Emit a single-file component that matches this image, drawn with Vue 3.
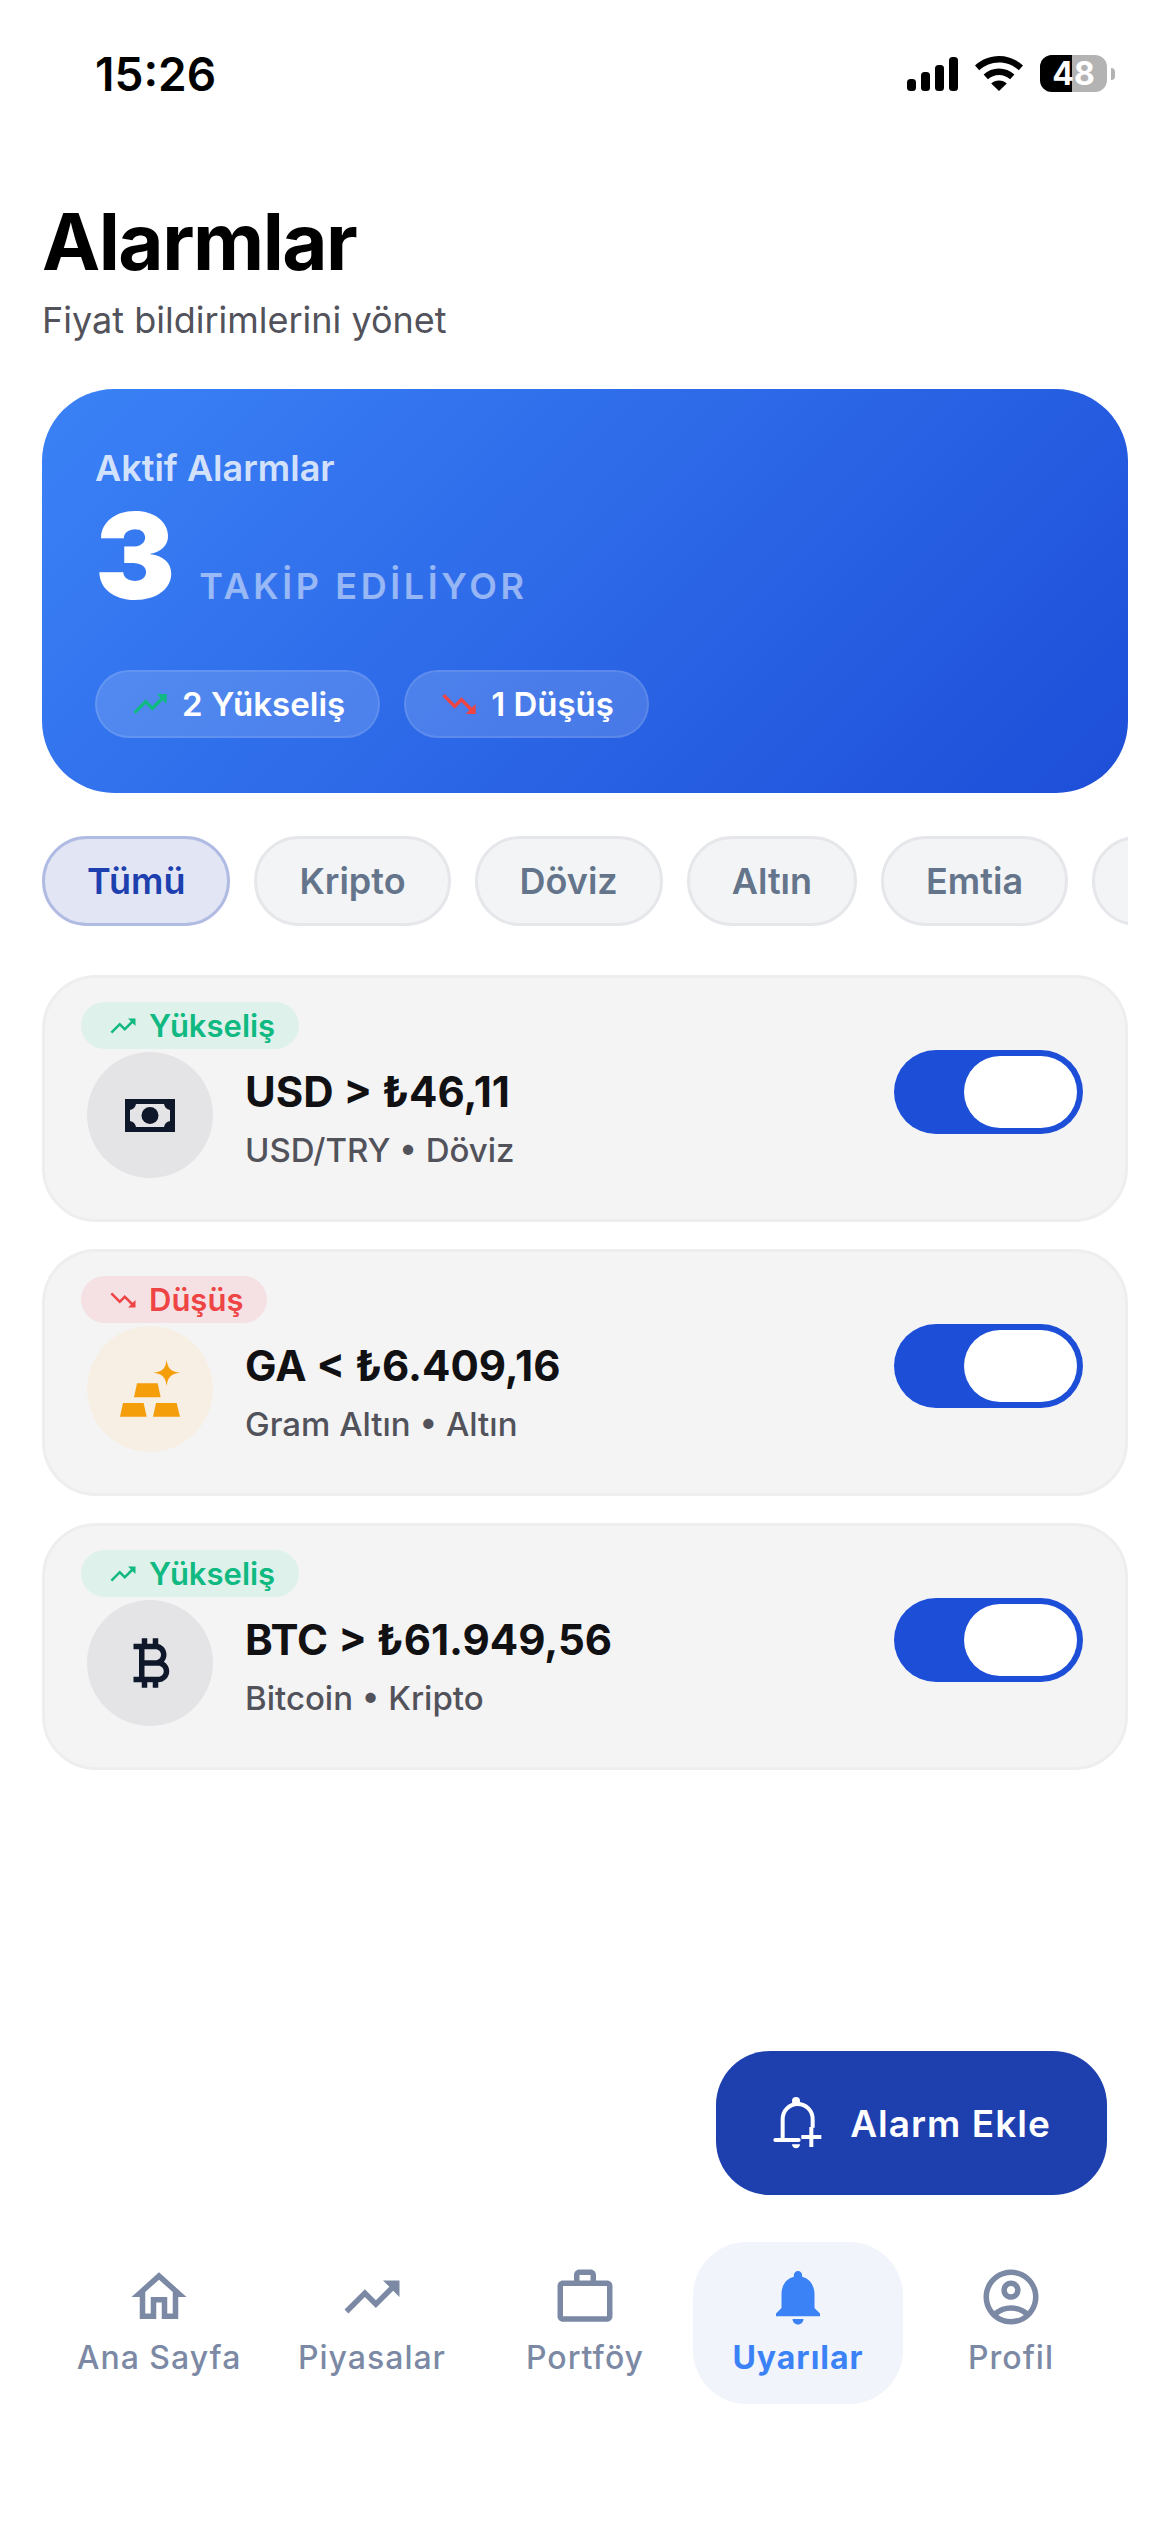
<script setup>
const batteryLevel = 48

const chips = [
  { label: 'Tümü', active: true },
  { label: 'Kripto' },
  { label: 'Döviz' },
  { label: 'Altın' },
  { label: 'Emtia' },
  { label: 'Hisse' }
]

const alerts = [
  { id: 'usd', dir: 'up', title: 'USD > ₺46,11', sub: 'USD/TRY • Döviz', kind: 'cash' },
  { id: 'ga', dir: 'down', title: 'GA < ₺6.409,16', sub: 'Gram Altın • Altın', kind: 'gold' },
  { id: 'btc', dir: 'up', title: 'BTC > ₺61.949,56', sub: 'Bitcoin • Kripto', kind: 'btc' }
]

const trendUp = 'M16 6l2.29 2.29-4.88 4.88-4-4L2 16.59 3.41 18l6-6 4 4 6.3-6.29L22 12V6z'
const trendDown = 'M16 18l2.29-2.29-4.88-4.88-4 4L2 7.41 3.41 6l6 6 4-4 6.3 6.29L22 12v6z'

const tabs = [
  { label: 'Ana Sayfa', d: 'M12 5.69l5 4.5V18h-2v-6H9v6H7v-7.81l5-4.5M12 3L2 12h3v8h6v-6h2v6h6v-8h3L12 3z' },
  { label: 'Piyasalar', d: trendUp },
  { label: 'Portföy', d: 'M14 6V4h-4v2h4zM4 8v11h16V8H4zm16-2c1.11 0 2 .89 2 2v11c0 1.11-.89 2-2 2H4c-1.11 0-2-.89-2-2l.01-11c0-1.11.88-2 1.99-2h4V4c0-1.11.89-2 2-2h4c1.11 0 2 .89 2 2v2h4z' },
  { label: 'Uyarılar', active: true, d: 'M12 22c1.1 0 2-.9 2-2h-4c0 1.1.89 2 2 2zm6-6v-5c0-3.07-1.64-5.64-4.5-6.32V4c0-.83-.67-1.5-1.5-1.5s-1.5.67-1.5 1.5v.68C7.63 5.36 6 7.92 6 11v5l-2 2v1h16v-1l-2-2z' },
  { label: 'Profil', d: 'M12 2C6.48 2 2 6.48 2 12s4.48 10 10 10 10-4.48 10-10S17.52 2 12 2zM7.35 18.5C8.66 17.56 10.26 17 12 17s3.34.56 4.65 1.5c-1.31.94-2.91 1.5-4.65 1.5s-3.34-.56-4.65-1.5zm10.79-1.38C16.45 15.8 14.32 15 12 15s-4.45.8-6.14 2.12C4.7 15.73 4 13.95 4 12c0-4.42 3.58-8 8-8s8 3.58 8 8c0 1.95-.7 3.73-1.86 5.12zM12 6c-1.93 0-3.5 1.57-3.5 3.5S10.07 13 12 13s3.5-1.57 3.5-3.5S13.93 6 12 6zm0 5c-.83 0-1.5-.67-1.5-1.5S11.17 8 12 8s1.5.67 1.5 1.5S12.83 11 12 11z' }
]
</script>

<template>
  <div class="screen">
    <header class="status">
      <span class="clock">15:26</span>
      <div class="status-icons">
        <svg class="signal" viewBox="0 0 51 34" fill="#000">
          <rect x="0" y="22" width="9" height="12" rx="3.5" />
          <rect x="14" y="15" width="9" height="19" rx="3.5" />
          <rect x="28" y="8" width="9" height="26" rx="3.5" />
          <rect x="42" y="0" width="9" height="34" rx="3.5" />
        </svg>
        <svg class="wifi" viewBox="0 0 48 35" fill="#000">
          <path d="M24 0C15 0 6.6 3.5 0 9.4l4.2 4.8C9.7 9.2 16.5 6.4 24 6.4s14.3 2.8 19.8 7.8L48 9.4C41.4 3.5 33 0 24 0z" />
          <path d="M24 12.5c-5.9 0-11.2 2.2-15.4 6l4.3 4.8c3-2.7 6.8-4.3 11.1-4.3s8.100 1.600 11.100 4.300l4.300-4.800c-4.200-3.800-9.500-6-15.400-6z" />
          <path d="M24 24.500c-3 0-5.700 1.100-7.800 3L24 35l7.800-7.500c-2.100-1.900-4.800-3-7.800-3z" />
        </svg>
        <div class="battery">
          <div class="battery-fill" :style="{ width: batteryLevel + '%' }"></div>
          <span class="battery-text">{{ batteryLevel }}</span>
        </div>
        <span class="battery-cap"></span>
      </div>
    </header>

    <section class="heading">
      <h1>Alarmlar</h1>
      <p>Fiyat bildirimlerini yönet</p>
    </section>

    <section class="hero">
      <div class="hero-label">Aktif Alarmlar</div>
      <div class="hero-count">
        <span class="hero-num">3</span>
        <span class="hero-note">TAKİP EDİLİYOR</span>
      </div>
      <div class="hero-pills">
        <div class="pill">
          <svg viewBox="0 0 24 24" fill="#10b981"><path :d="trendUp" /></svg>
          <span>2 Yükseliş</span>
        </div>
        <div class="pill">
          <svg viewBox="0 0 24 24" fill="#ef4444"><path :d="trendDown" /></svg>
          <span>1 Düşüş</span>
        </div>
      </div>
    </section>

    <nav class="chips">
      <button v-for="c in chips" :key="c.label" class="chip" :class="{ active: c.active }">{{ c.label }}</button>
    </nav>

    <section class="list">
      <article v-for="a in alerts" :key="a.id" class="card">
        <div class="card-main">
          <div class="badge" :class="a.dir">
            <svg viewBox="0 0 24 24" fill="currentColor"><path :d="a.dir === 'up' ? trendUp : trendDown" /></svg>
            <span>{{ a.dir === 'up' ? 'Yükseliş' : 'Düşüş' }}</span>
          </div>
          <div class="row">
            <div class="avatar" :class="{ gold: a.kind === 'gold' }">
              <svg v-if="a.kind === 'cash'" class="ico-cash" viewBox="0 0 50 33">
                <rect width="50" height="33" fill="#0f172a" />
                <path d="M11 5h28c.6 3.400 2.600 5.400 6 6v11c-3.400.6-5.400 2.600-6 6H11c-.6-3.400-2.600-5.400-6-6V11c3.400-.6 5.400-2.600 6-6z" fill="#e4e4e7" />
                <circle cx="25" cy="16.500" r="8.500" fill="#0f172a" />
              </svg>
              <svg v-else-if="a.kind === 'gold'" class="ico-gold" viewBox="0 0 198 198" fill="#f59e0b">
                <path d="M60 82h62l9 42H51z" />
                <path d="M18 141h62l9 41H9z" />
                <path d="M117 141h62l10 41H108z" />
                <path d="M149 11c3 26 13 36 40 39-27 3-37 13-40 40-3-27-13-37-40-40 27-3 37-13 40-39z" />
              </svg>
              <svg v-else class="ico-btc" viewBox="0 0 24 24" fill="#0f172a">
                <path d="M17.060 11.570c.59-.69.94-1.590.94-2.570 0-1.860-1.270-3.430-3-3.870V3h-2v2h-2V3H9v2H6v2h2v10H6v2h3v2h2v-2h2v2h2v-2c2.210 0 4-1.790 4-4 0-1.450-.78-2.730-1.940-3.430zM10 7h4c1.100 0 2 .9 2 2s-.9 2-2 2h-4V7zm5 10h-5v-4h5c1.100 0 2 .9 2 2s-.9 2-2 2z" />
              </svg>
            </div>
            <div class="text">
              <div class="title">{{ a.title }}</div>
              <div class="sub">{{ a.sub }}</div>
            </div>
          </div>
        </div>
        <div class="toggle"><span class="thumb"></span></div>
      </article>
    </section>

    <button class="fab">
      <svg viewBox="0 0 162 162" fill="none" stroke="#fff" stroke-width="12">
        <path d="M32 132V70c0-26 20-46 45-46s45 20 45 46v25" />
        <path d="M10 132h70" stroke-linecap="round" />
        <circle cx="72" cy="15" r="12" fill="#fff" stroke="none" />
        <path d="M118 93v60M88 123h60" />
        <path d="M60 145h24c0 7-5 12-12 12s-12-5-12-12z" fill="#fff" stroke="none" />
      </svg>
      <span>Alarm Ekle</span>
    </button>

    <footer class="tabs">
      <div v-for="t in tabs" :key="t.label" class="tab" :class="{ active: t.active }">
        <svg viewBox="0 0 24 24" fill="currentColor"><path :d="t.d" /></svg>
        <span>{{ t.label }}</span>
      </div>
    </footer>
  </div>
</template>

<style>
html, body { margin: 0; background: #fff; }
</style>

<style scoped>
.screen {
  width: 1170px;
  height: 2532px;
  background: #fff;
  font-family: Inter, "Noto Sans", "DejaVu Sans", sans-serif;
  display: flex;
  flex-direction: column;
  overflow: hidden;
  box-sizing: border-box;
}

/* status bar */
.status {
  height: 197px;
  box-sizing: border-box;
  padding: 55px 55px 0 95px;
  display: flex;
  justify-content: space-between;
  align-items: flex-start;
  flex: none;
}
.clock { font-size: 46px; font-weight: 600; line-height: 38px; color: #000; }
.status-icons { display: flex; align-items: center; gap: 0; }
.signal { width: 51px; height: 34px; }
.wifi { width: 48px; height: 35px; margin-left: 17px; }
.battery {
  position: relative;
  width: 67px;
  height: 37px;
  margin-left: 17px;
  border-radius: 12px;
  background: #b3b3b3;
  overflow: hidden;
  display: flex;
  align-items: center;
  justify-content: center;
}
.battery-fill { position: absolute; left: 0; top: 0; bottom: 0; background: #000; }
.battery-text { position: relative; color: #fff; font-size: 32px; font-weight: 700; line-height: 37px; }
.battery-cap {
  width: 4px;
  height: 12px;
  margin-left: 4px;
  background: #b3b3b3;
  border-radius: 0 6px 6px 0;
}

/* page heading */
.heading { padding: 0 42px; flex: none; }
.heading h1 {
  margin: 0;
  font-size: 78px;
  line-height: 90px;
  font-weight: 700;
  letter-spacing: -1.5px;
  color: #000;
}
.heading p {
  margin: 8px 0 0;
  font-size: 36px;
  line-height: 50px;
  color: #52525b;
}

/* summary card */
.hero {
  flex: none;
  margin: 44px 42px 0;
  height: 404px;
  box-sizing: border-box;
  padding: 54px 53px 0;
  border-radius: 72px;
  background: linear-gradient(135deg, #3b82f6, #1d4ed8);
  color: #fff;
}
.hero-label { font-size: 36px; line-height: 50px; font-weight: 600; color: rgba(255, 255, 255, .8); }
.hero-count { display: flex; align-items: baseline; gap: 24px; margin-top: 3px; }
.hero-num { font-size: 120px; line-height: 120px; font-weight: 900; }
.hero-note { font-size: 36px; font-weight: 600; letter-spacing: 3.6px; color: rgba(255, 255, 255, .5); }
.hero-pills { display: flex; gap: 24px; margin-top: 54px; }
.pill {
  height: 68px;
  box-sizing: border-box;
  padding: 0 33px;
  display: flex;
  align-items: center;
  gap: 12px;
  border-radius: 34px;
  background: rgba(255, 255, 255, .15);
  border: 2px solid rgba(255, 255, 255, .1);
  font-size: 33px;
  font-weight: 600;
}
.pill svg { width: 40px; height: 40px; flex: none; }

/* category filter */
.chips {
  flex: none;
  margin: 43px 42px 0;
  display: flex;
  gap: 24px;
  overflow: hidden;
}
.chip {
  flex: none;
  height: 90px;
  box-sizing: border-box;
  padding: 0 42px;
  border-radius: 45px;
  border: 3px solid #e5e7eb;
  background: #f3f4f6;
  color: #64748b;
  font-family: inherit;
  font-size: 36px;
  font-weight: 600;
}
.chip.active { background: #e2e6f4; border-color: #b0bbe4; color: #1e40af; }

/* alert cards */
.list { flex: none; margin: 49px 42px 0; display: flex; flex-direction: column; gap: 27px; }
.card {
  height: 247px;
  box-sizing: border-box;
  padding: 24px 42px 0 36px;
  background: #f4f4f5;
  border: 3px solid #eeeeef;
  border-radius: 54px;
  display: flex;
  justify-content: space-between;
}
.card-main { display: flex; flex-direction: column; align-items: flex-start; gap: 3px; }
.badge {
  height: 47px;
  box-sizing: border-box;
  padding: 0 24px 0 27px;
  display: flex;
  align-items: center;
  gap: 11px;
  border-radius: 24px;
  font-size: 31px;
  font-weight: 600;
}
.badge svg { width: 30px; height: 30px; flex: none; }
.badge.up { background: #dff1eb; color: #10b981; }
.badge.down { background: #f5e1e4; color: #ef4444; }
.row { display: flex; align-items: center; margin-left: 6px; gap: 32px; }
.avatar {
  width: 126px;
  height: 126px;
  border-radius: 50%;
  background: #e4e4e7;
  display: flex;
  align-items: center;
  justify-content: center;
  flex: none;
}
.avatar.gold { background: #f7efe3; }
.ico-cash { width: 50px; height: 33px; }
.ico-gold { width: 66px; height: 66px; }
.ico-btc { width: 66px; height: 66px; }
.text { padding-top: 8px; }
.title { font-size: 42px; line-height: 52px; font-weight: 700; color: #111114; }
.sub { font-size: 33px; line-height: 44px; margin-top: 10px; font-weight: 500; color: #52525b; }
.toggle {
  width: 189px;
  height: 84px;
  margin-top: 48px;
  box-sizing: border-box;
  padding: 6px;
  border-radius: 42px;
  background: #1d4ed8;
  display: flex;
  justify-content: flex-end;
}
.thumb { width: 113px; height: 72px; border-radius: 36px; background: #fff; }

/* add-alarm action */
.fab {
  flex: none;
  align-self: flex-end;
  margin: 281px 63px 0 0;
  width: 391px;
  height: 144px;
  border: 0;
  border-radius: 54px;
  background: #1e40af;
  color: #fff;
  display: flex;
  align-items: center;
  justify-content: center;
  gap: 24px;
  font-family: inherit;
  font-size: 37px;
  font-weight: 600;
  letter-spacing: 1px;
}
.fab svg { width: 54px; height: 54px; flex: none; }

/* bottom navigation */
.tabs {
  flex: none;
  margin-top: 47px;
  padding: 0 54px;
  display: flex;
  justify-content: space-between;
}
.tab {
  width: 210px;
  height: 162px;
  border-radius: 54px;
  display: flex;
  flex-direction: column;
  align-items: center;
  justify-content: flex-start;
  padding-top: 22px;
  box-sizing: border-box;
  color: #7c89a5;
  font-size: 32px;
  font-weight: 500;
  letter-spacing: 1px;
}
.tab svg { width: 66px; height: 66px; margin-bottom: 8px; }
.tab.active { background: #f1f4fb; color: #3b82f6; font-weight: 700; }
</style>
